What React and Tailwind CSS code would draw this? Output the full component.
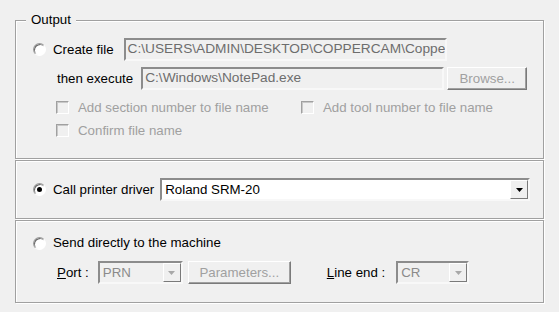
import React from 'react';

const font = { fontFamily: '"Liberation Sans", Arial, sans-serif' };

function Radio({ checked }) {
  return (
    <span className="relative inline-block w-[13px] h-[13px] rounded-full bg-white border border-[#9a9a9a] border-r-white border-b-white shadow-[inset_1px_1px_0_#6a6a6a]">
      {checked && <span className="absolute left-[3px] top-[3px] w-[5px] h-[5px] rounded-full bg-black" />}
    </span>
  );
}

function Check({ label }) {
  return (
    <div className="flex items-center gap-[9px] h-[23px]">
      <span className="w-[13px] h-[13px] bg-[#f0f0f0] border border-[#a0a0a0] border-r-white border-b-white shadow-[inset_1px_1px_0_#c8c8c8]" />
      <span className="text-[#a0a0a0]">{label}</span>
    </div>
  );
}

function Field({ w, value, disabled }) {
  return (
    <div
      className={`h-[23px] flex items-center px-[2px] text-[13.7px] border-2 border-[#8c8c8c] border-r-[#f8f8f8] border-b-[#f8f8f8] overflow-hidden whitespace-nowrap ${disabled ? 'bg-[#f0f0f0] text-[#6d6d6d]' : 'bg-white text-black'}`}
      style={{ width: w }}
    >
      {value}
    </div>
  );
}

function Button({ w, label }) {
  return (
    <div
      className="h-[23px] flex items-center justify-center bg-[#f0f0f0] text-[#a0a0a0] border border-white border-r-[#7a7a7a] border-b-[#7a7a7a] shadow-[inset_-1px_-1px_0_#a0a0a0]"
      style={{ width: w }}
    >
      {label}
    </div>
  );
}

function Combo({ w, value, disabled }) {
  return (
    <div
      className={`h-[23px] flex items-center border-2 border-[#8c8c8c] border-r-[#f8f8f8] border-b-[#f8f8f8] ${disabled ? 'bg-[#f0f0f0] text-[#8a8a8a]' : 'bg-white text-black'}`}
      style={{ width: w }}
    >
      <span className="flex-1 px-[3px] whitespace-nowrap overflow-hidden">{value}</span>
      <span className="w-[18px] h-[19px] flex items-center justify-center bg-[#f0f0f0] border border-white border-r-[#7a7a7a] border-b-[#7a7a7a]">
        <svg width="7" height="4" viewBox="0 0 7 4">
          <path d="M0 0H7L3.5 4Z" fill={disabled ? '#a8a8a8' : '#000'} />
        </svg>
      </span>
    </div>
  );
}

export default function App() {
  return (
    <div className="w-[559px] h-[312px] bg-[#f0f0f0] text-[13.3px] text-black pt-[20px] pl-[15px]" style={font}>
      <div className="w-[529px] flex flex-col">
        {/* Output group */}
        <div className="relative h-[139px] border border-[#a0a0a0] shadow-[inset_1px_1px_0_#fff,1px_1px_0_#fff] pl-[17px] pt-[17px]">
          <span className="absolute left-[10px] -top-[9px] px-[5px] bg-[#f0f0f0] leading-[16px]">Output</span>
          <div className="flex items-center h-[23px]">
            <Radio />
            <span className="ml-[7px]">Create file</span>
            <div className="ml-[10px]">
              <Field w={323} value="C:\USERS\ADMIN\DESKTOP\COPPERCAM\CopperCAM" disabled />
            </div>
          </div>
          <div className="flex items-center h-[23px] mt-[6px]">
            <span className="ml-[24px]">then execute</span>
            <div className="ml-[8px]">
              <Field w={303} value="C:\Windows\NotePad.exe" disabled />
            </div>
            <div className="ml-[3px]">
              <Button w={80} label="Browse..." />
            </div>
          </div>
          <div className="flex pl-[23px] mt-[6px]">
            <div className="w-[245px]">
              <Check label="Add section number to file name" />
            </div>
            <Check label="Add tool number to file name" />
          </div>
          <div className="pl-[23px]">
            <Check label="Confirm file name" />
          </div>
        </div>

        {/* Printer driver */}
        <div className="h-[59px] mt-[1px] border border-[#a0a0a0] shadow-[inset_1px_1px_0_#fff,1px_1px_0_#fff] pl-[17px] flex items-center">
          <Radio checked />
          <span className="ml-[7px]">Call printer driver</span>
          <div className="ml-[6px]">
            <Combo w={370} value="Roland SRM-20" />
          </div>
        </div>

        {/* Send directly */}
        <div className="h-[83px] mt-[1px] border border-[#a0a0a0] shadow-[inset_1px_1px_0_#fff,1px_1px_0_#fff] pl-[17px] pt-[12px]">
          <div className="flex items-center h-[20px]">
            <Radio />
            <span className="ml-[7px]">Send directly to the machine</span>
          </div>
          <div className="flex items-center h-[23px] mt-[8px]">
            <span className="ml-[24px]"><span className="underline">P</span>ort :</span>
            <div className="ml-[9px]">
              <Combo w={85} value="PRN" disabled />
            </div>
            <div className="ml-[5px]">
              <Button w={103} label="Parameters..." />
            </div>
            <span className="ml-[36px]"><span className="underline">L</span>ine end :</span>
            <div className="ml-[11px]">
              <Combo w={73} value="CR" disabled />
            </div>
          </div>
        </div>
      </div>
    </div>
  );
}
